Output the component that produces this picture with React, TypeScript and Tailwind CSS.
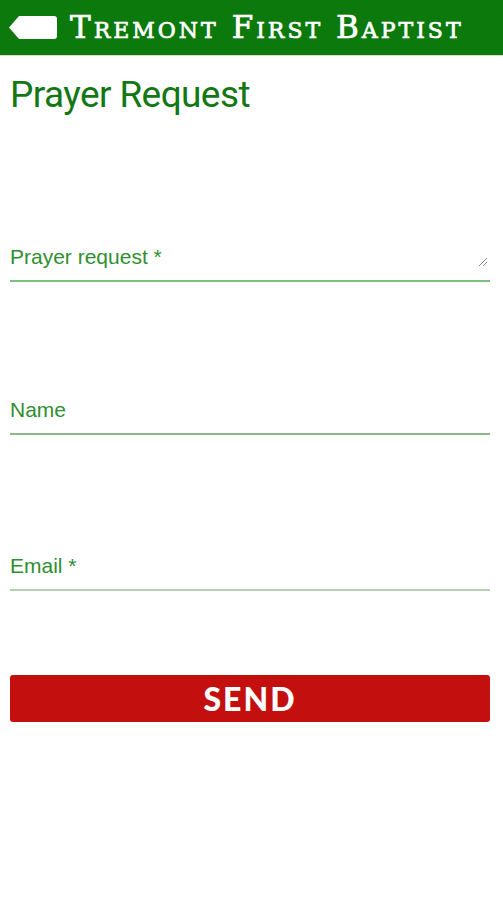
import React from "react";

function Field({ label, resize, lineColor, mt }: { label: string; resize?: boolean; lineColor: string; mt: string }) {
  return (
    <div className={`${mt} relative w-[480px]`}>
      <div className="text-[21px] leading-[26px] text-[#2f8f2f] pb-[10px]" style={{ fontFamily: '"Liberation Sans", Arial, sans-serif' }}>
        {label}
      </div>
      {resize && (
        <svg className="absolute right-[2px] top-[13px]" width="10" height="10" viewBox="0 0 10 10">
          <path d="M1 9 L9 1 M5 9 L9 5" stroke="#888" strokeWidth="1" />
        </svg>
      )}
      <div className={`h-[2px] ${lineColor}`} />
    </div>
  );
}

export default function App() {
  return (
    <div className="w-[503px] h-[900px] bg-white">
      <div className="h-[56px] bg-[#0b790b] flex items-center border-b border-[#cfe3cf]">
        <svg className="ml-[8px]" width="50" height="25" viewBox="0 0 50 25">
          <path d="M11 1 H46 Q49 1 49 4 V21 Q49 24 46 24 H11 L1 12.5 Z" fill="white" />
        </svg>
        <div
          className="ml-[12px] text-white text-[31px] leading-none tracking-[3px] [-webkit-text-stroke:0.7px_white]"
          style={{ fontFamily: '"DejaVu Serif", "Liberation Serif", serif', fontVariant: "small-caps" }}
        >
          Tremont First Baptist
        </div>
      </div>
      <div className="px-[10px]">
        <h1
          className="mt-[17px] text-[37px] leading-[44px] text-[#137713] tracking-[-0.6px]"
          style={{ fontFamily: 'Roboto, "Noto Sans", sans-serif' }}
        >
          Prayer Request
        </h1>
        <Field label="Prayer request *" resize lineColor="bg-[#7cbf7c]" mt="mt-[127px]" />
        <Field label="Name" lineColor="bg-[#8db68d]" mt="mt-[115px]" />
        <Field label="Email *" lineColor="bg-[#b4cfb4]" mt="mt-[118px]" />
        <button className="mt-[84px] w-[480px] h-[47px] bg-[#c40f0f] rounded-[3px] text-white text-[32px] font-black tracking-[2px] flex items-center justify-center" style={{ fontFamily: 'Lato, "Open Sans", sans-serif' }}>
          SEND
        </button>
      </div>
    </div>
  );
}
